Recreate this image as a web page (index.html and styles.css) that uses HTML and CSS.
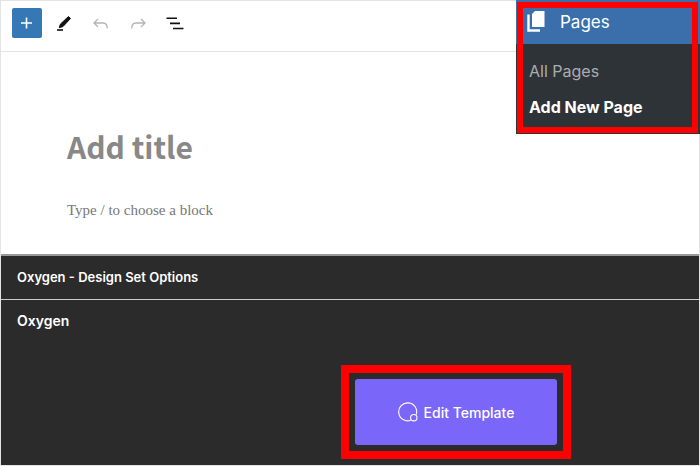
FILE: index.html
```html
<!DOCTYPE html>
<html lang="en">
  <head>
    <meta charset="UTF-8" />
    <meta name="viewport" content="width=device-width, initial-scale=1" />
    <title>Add New Page</title>
    <link rel="stylesheet" href="styles.css">
  </head>
  <body>
    <div class="editor">
      <header class="toolbar">
        <button type="button" class="tool tool-add" aria-label="Add block">
          <svg width="30" height="30" viewBox="0 0 30 30"><path d="M14.500 9.500v11M9 15h11" fill="none" stroke="#fff" stroke-width="1.600"/></svg>
        </button>
        <button type="button" class="tool" aria-label="Tools">
          <svg width="30" height="30" viewBox="0 0 30 30"><path d="M19.500 8.500l2 2L14 18.500l-3.800 1.200L11.500 16z" fill="#111" stroke="#111" stroke-linejoin="round"/><path d="M8 22h6" stroke="#111" stroke-width="1.600"/></svg>
        </button>
        <button type="button" class="tool" aria-label="Undo" disabled>
          <svg width="30" height="30" viewBox="0 0 30 30"><path d="M12 11l-4 4 4 4M8 15h9c3 0 4.300 1.700 4.300 5.500" fill="none" stroke="#b5b5b5" stroke-width="1.300"/></svg>
        </button>
        <button type="button" class="tool" aria-label="Redo" disabled>
          <svg width="30" height="30" viewBox="0 0 30 30"><path d="M18 11l4 4-4 4M22 15h-9c-3 0-4.300 1.700-4.300 5.500" fill="none" stroke="#b5b5b5" stroke-width="1.300"/></svg>
        </button>
        <button type="button" class="tool" aria-label="Document overview">
          <svg width="30" height="30" viewBox="0 0 30 30"><path d="M6.500 10.200h10.500M10 15.400h10M13 20.500h10.500" fill="none" stroke="#111" stroke-width="1.600"/></svg>
        </button>
      </header>

      <main class="content">
        <input type="text" class="post-title" placeholder="Add title" aria-label="Add title" />
        <input type="text" class="post-block" placeholder="Type / to choose a block" aria-label="Type / to choose a block" />
      </main>

      <section class="metaboxes">
        <h2 class="metabox-heading">Oxygen - Design Set Options</h2>
        <div class="metabox">
          <h2 class="metabox-title">Oxygen</h2>
          <div class="metabox-actions">
            <div class="highlight">
              <button type="button" class="edit-template">
                <svg width="20" height="20" viewBox="0 0 20 20" fill="none" stroke="#fff" stroke-width="1.100"><path d="M12.800 18.300A9 9 0 1 1 18.300 12.500"/><circle cx="15.800" cy="15.700" r="3.200"/></svg>
                Edit Template
              </button>
            </div>
          </div>
        </div>
      </section>

      <nav class="admin-menu">
        <a href="#" class="menu-top">
          <svg width="18" height="22" viewBox="0 0 18 22"><path d="M8 0h9.500v16H5V3z" fill="#fff"/><path d="M1.500 3.500V19.500H13" fill="none" stroke="#fff" stroke-width="2.400"/></svg>
          Pages
        </a>
        <a href="#" class="menu-item">All Pages</a>
        <a href="#" class="menu-item current">Add New Page</a>
      </nav>
    </div>
  </body>
</html>
```

FILE: styles.css
```css
* {
  box-sizing: border-box;
}

body {
  margin: 0;
  font-family: Inter, "Liberation Sans", sans-serif;
  background: #fff;
}

.editor {
  position: relative;
  display: flex;
  flex-direction: column;
  min-height: 100vh;
  border: 1px solid #e4e4e4;
}

/* toolbar */
.toolbar {
  display: flex;
  align-items: flex-start;
  gap: 7px;
  padding: 7px 11px;
  height: 51px;
  border-bottom: 1px solid #e4e4e4;
}

.tool {
  width: 30px;
  height: 30px;
  padding: 0;
  border: none;
  border-radius: 2px;
  background: none;
}

.tool svg {
  display: block;
}

.tool-add {
  background: #3578b5;
}

/* content */
.content {
  display: flex;
  flex-direction: column;
  gap: 26px;
  padding: 70px 66px 30px;
}

.post-title,
.post-block {
  width: 100%;
  padding: 0;
  border: none;
  outline: none;
  background: none;
}

.post-title {
  height: 48px;
  font: bold 30px "Noto Sans CJK JP", "Noto Sans", sans-serif;
}

.post-block {
  height: 28px;
  font: 15px "Liberation Serif", serif;
}

.post-title::placeholder {
  color: #888;
}

.post-block::placeholder {
  color: #777;
}

/* meta boxes */
.metaboxes {
  flex: 1;
  border-top: 2px solid #999;
  color: #fff;
  background: #2b2b2b;
}

.metabox-heading,
.metabox-title {
  margin: 0;
  padding: 0 16px;
  line-height: 42px;
  font-weight: 600;
}

.metabox-heading {
  padding-bottom: 1px;
  border-bottom: 1px solid #ccc;
  font-size: 13px;
}

.metabox-title {
  font-size: 14px;
}

.metabox-actions {
  display: flex;
  justify-content: center;
  padding: 23px 0 5px 212px;
}

.highlight {
  padding: 6px;
  border: 8px solid #f00;
}

.edit-template {
  display: flex;
  align-items: center;
  justify-content: center;
  gap: 6px;
  width: 202px;
  height: 66px;
  border: none;
  border-radius: 3px;
  color: #fff;
  background: #7a66f8;
  font: 500 14px Inter, sans-serif;
}

/* admin menu, open over the editor */
.admin-menu {
  position: absolute;
  top: -1px;
  right: -1px;
  width: 184px;
  height: 134px;
  background: #2e3337;
}

.admin-menu::after {
  content: "";
  position: absolute;
  inset: 2px 2px 1px 1px;
  border: 6px solid #f00;
  pointer-events: none;
}

.menu-top,
.menu-item {
  display: flex;
  align-items: center;
  padding: 0 13px;
  height: 36px;
  color: #aaadb0;
  font-size: 16px;
  text-decoration: none;
}

.menu-top {
  gap: 15px;
  height: 44px;
  margin-bottom: 9px;
  padding: 0 11px;
  color: #fff;
  background: #3a6fab;
  font-size: 17px;
}

.menu-item.current {
  color: #fff;
  font-weight: 700;
}
```
